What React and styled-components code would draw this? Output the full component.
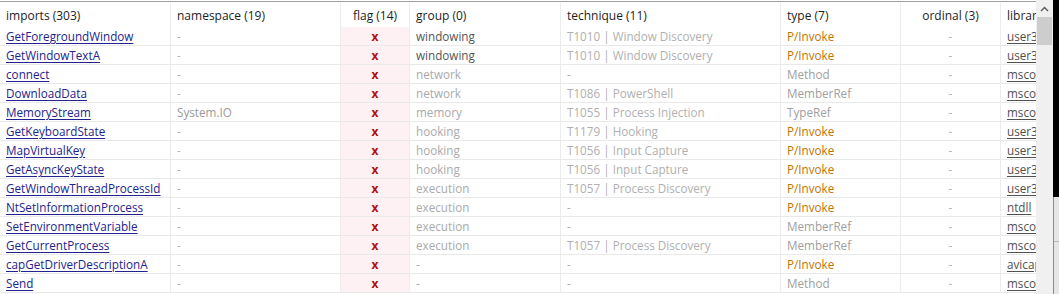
import React from "react";
import styled, { createGlobalStyle } from "styled-components";

const Global = createGlobalStyle`
  html, body { margin: 0; padding: 0; background: #ffffff; }
  body { font-family: "Open Sans", "Noto Sans", sans-serif; }
`;

const columns = [
  { key: "imports", label: "imports (303)", width: 170 },
  { key: "namespace", label: "namespace (19)", width: 170 },
  { key: "flag", label: "flag (14)", width: 69, center: true, flag: true },
  { key: "group", label: "group (0)", width: 151 },
  { key: "technique", label: "technique (11)", width: 220 },
  { key: "type", label: "type (7)", width: 120 },
  { key: "ordinal", label: "ordinal (3)", width: 100, center: true },
  { key: "library", label: "library", width: 80 },
];

const rows = [
  ["GetForegroundWindow", "-", "windowing", "T1010 | Window Discovery", "P/Invoke", "user32"],
  ["GetWindowTextA", "-", "windowing", "T1010 | Window Discovery", "P/Invoke", "user32"],
  ["connect", "-", "network", "-", "Method", "mscorlib"],
  ["DownloadData", "-", "network", "T1086 | PowerShell", "MemberRef", "mscorlib"],
  ["MemoryStream", "System.IO", "memory", "T1055 | Process Injection", "TypeRef", "mscorlib"],
  ["GetKeyboardState", "-", "hooking", "T1179 | Hooking", "P/Invoke", "user32"],
  ["MapVirtualKey", "-", "hooking", "T1056 | Input Capture", "P/Invoke", "user32"],
  ["GetAsyncKeyState", "-", "hooking", "T1056 | Input Capture", "P/Invoke", "user32"],
  ["GetWindowThreadProcessId", "-", "execution", "T1057 | Process Discovery", "P/Invoke", "user32"],
  ["NtSetInformationProcess", "-", "execution", "-", "P/Invoke", "ntdll"],
  ["SetEnvironmentVariable", "-", "execution", "-", "MemberRef", "mscorlib"],
  ["GetCurrentProcess", "-", "execution", "T1057 | Process Discovery", "MemberRef", "mscorlib"],
  ["capGetDriverDescriptionA", "-", "-", "-", "P/Invoke", "avicap32"],
  ["Send", "-", "-", "-", "Method", "mscorlib"],
];

const Window = styled.div`
  display: flex;
  height: 294px;
  overflow: hidden;
  box-sizing: border-box;
`;

const TableArea = styled.div`
  flex: 1;
  overflow: hidden;
  border-top: 1px solid #a0a0a0;
  margin-top: 1px;
  font-size: 11.7px;
`;

const Table = styled.div`
  display: grid;
  grid-template-columns: ${(p) => p.$cols};
  width: max-content;
`;

const HeaderCell = styled.div`
  height: 24px;
  display: flex;
  align-items: center;
  justify-content: ${(p) => (p.$center ? "center" : "flex-start")};
  padding: ${(p) => (p.$center ? "0" : "0 0 0 6px")};
  color: #1e1e1e;
  font-size: 12px;
  border-left: ${(p) => (p.$first ? "none" : "1px solid #ececec")};
  white-space: nowrap;
  overflow: hidden;
  box-sizing: border-box;
  margin-top: 1px;
`;

const Cell = styled.div`
  height: 19px;
  line-height: 18px;
  box-sizing: border-box;
  border-bottom: 1px solid #e9e9e9;
  border-left: ${(p) => (p.$first ? "none" : "1px solid #ececec")};
  background: ${(p) => (p.$flag ? "#fdf1f4" : "transparent")};
  padding: ${(p) => (p.$center ? "0" : "0 0 0 6px")};
  text-align: ${(p) => (p.$center ? "center" : "left")};
  color: ${(p) => p.$color || "#aaaaaa"};
  white-space: nowrap;
  overflow: hidden;
`;

const Link = styled.span`
  color: ${(p) => p.$color};
  text-decoration: underline;
  text-underline-offset: 2px;
`;

const Mark = styled.span`
  color: #b01010;
  font-weight: 700;
  font-size: 12px;
`;

const Scrollbar = styled.div`
  width: 17px;
  background: #f0f0f0;
  display: flex;
  flex-direction: column;
  align-items: center;
`;

const Arrow = styled.div`
  height: 17px;
  display: flex;
  align-items: center;
  justify-content: center;
`;

const Thumb = styled.div`
  width: 15px;
  height: 28px;
  background: #cdcdcd;
`;

const Edge = styled.div`
  width: 6px;
  display: flex;
  flex-direction: column;
`;

const EdgeDark = styled.div`
  height: 197px;
  background: #000;
`;

const EdgeLight = styled.div`
  flex: 1;
  background: #e6e6e6;
  border-left: 1px solid #8c8c8c;
`;

const EdgeLine = styled.div`
  margin-top: 44px;
  height: 1px;
  background: #b8b8b8;
`;

function groupColor(g) {
  return g === "windowing" ? "#555555" : "#aaaaaa";
}
function typeColor(t) {
  return t === "P/Invoke" ? "#c27400" : "#a0a0a0";
}

export default function App() {
  const cols = columns.map((c) => `${c.width}px`).join(" ");
  return (
    <>
      <Global />
      <Window>
        <TableArea>
          <Table $cols={cols}>
            {columns.map((c, i) => (
              <HeaderCell key={c.key} $center={c.center} $first={i === 0}>
                {c.label}
              </HeaderCell>
            ))}
            {rows.map((r, ri) => (
              <React.Fragment key={ri}>
                <Cell $first>
                  <Link $color="#23238f">{r[0]}</Link>
                </Cell>
                <Cell $color={r[1] === "-" ? "#b5b5b5" : "#9a9a9a"}>{r[1]}</Cell>
                <Cell $flag $center>
                  <Mark>x</Mark>
                </Cell>
                <Cell $color={groupColor(r[2])}>{r[2]}</Cell>
                <Cell $color="#b0b0b0">{r[3]}</Cell>
                <Cell $color={typeColor(r[4])}>{r[4]}</Cell>
                <Cell $center $color="#b5b5b5">-</Cell>
                <Cell>
                  <Link $color="#505050">{r[5]}</Link>
                </Cell>
              </React.Fragment>
            ))}
          </Table>
        </TableArea>
        <Scrollbar>
          <Arrow>
            <svg width="9" height="6" viewBox="0 0 9 6">
              <path d="M1 5 L4.5 1.5 L8 5" fill="none" stroke="#606060" strokeWidth="1.5" />
            </svg>
          </Arrow>
          <Thumb />
        </Scrollbar>
        <Edge>
          <EdgeDark />
          <EdgeLight>
            <EdgeLine />
          </EdgeLight>
        </Edge>
      </Window>
    </>
  );
}
